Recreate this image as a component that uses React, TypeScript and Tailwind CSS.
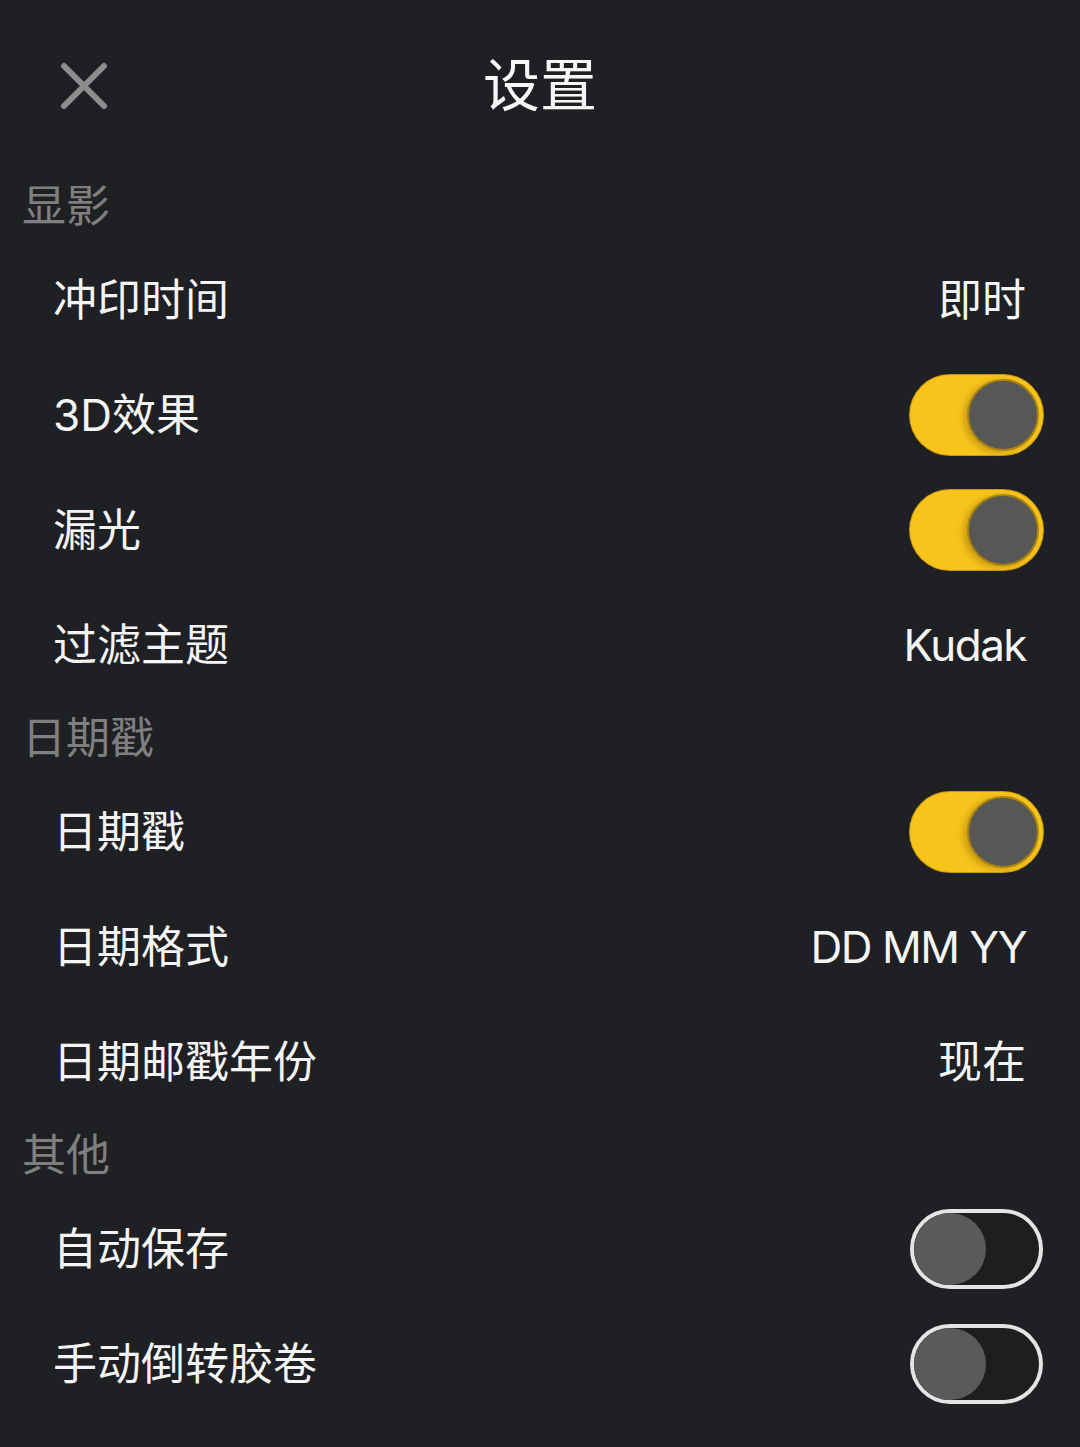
import React from "react";

const FONT = { fontFamily: '"Inter", "Noto Sans CJK SC", sans-serif' };

function ToggleOn() {
  return (
    <div className="relative w-[133px] h-[80px] rounded-full bg-[#f8c41b] shadow-[0_0_0_1px_#c99a10]">
      <div className="absolute right-[4px] top-[4px] w-[72px] h-[72px] rounded-full bg-[#575756] border-2 border-[#a9850f] shadow-[-4px_2px_6px_rgba(120,90,0,0.35)]" />
    </div>
  );
}

function ToggleOff() {
  return (
    <div className="relative w-[133px] h-[80px] rounded-full border-[4px] border-[#e4e4e4] bg-[#1d1e20]">
      <div className="absolute left-[0px] top-[0px] w-[72px] h-[72px] rounded-full bg-[#5a5a58]" />
    </div>
  );
}

function Section({ title }: { title: string }) {
  return (
    <div className="h-[72px] flex items-center pl-[22px]">
      <span className="text-[44px] leading-none text-[#7f7f7f]">{title}</span>
    </div>
  );
}

function Row({ label, value, latin, toggle }: { label: string; value?: string; latin?: boolean; toggle?: "on" | "off" }) {
  return (
    <div className="h-[115px] flex items-center justify-between pl-[53px] pr-[37px]">
      <span className="text-[44px] leading-none text-[#f4f4f4]">{label}</span>
      {value && (
        <span className={latin ? "text-[44px] leading-none text-[#f4f4f4] mr-[17px] tracking-[-1.5px]" : "text-[44px] leading-none text-[#f4f4f4] mr-[17px]"}>
          {value}
        </span>
      )}
      {toggle === "on" && <ToggleOn />}
      {toggle === "off" && <ToggleOff />}
    </div>
  );
}

export default function App() {
  return (
    <div className="min-h-screen w-[1080px] bg-[#1f2023]" style={FONT}>
      <div className="h-[170px] relative flex items-center justify-center">
        <svg className="absolute left-[58px] top-[60px]" width="52" height="52" viewBox="0 0 52 52">
          <path d="M6 6 L46 46 M46 6 L6 46" stroke="#8d8d8d" strokeWidth="6" strokeLinecap="round" />
        </svg>
        <span className="text-[57px] leading-none text-[#f6f6f6]">设置</span>
      </div>
      <Section title="显影" />
      <Row label="冲印时间" value="即时" />
      <Row label="3D效果" toggle="on" />
      <Row label="漏光" toggle="on" />
      <Row label="过滤主题" value="Kudak" latin />
      <Section title="日期戳" />
      <Row label="日期戳" toggle="on" />
      <Row label="日期格式" value="DD MM YY" latin />
      <Row label="日期邮戳年份" value="现在" />
      <Section title="其他" />
      <Row label="自动保存" toggle="off" />
      <Row label="手动倒转胶卷" toggle="off" />
    </div>
  );
}
